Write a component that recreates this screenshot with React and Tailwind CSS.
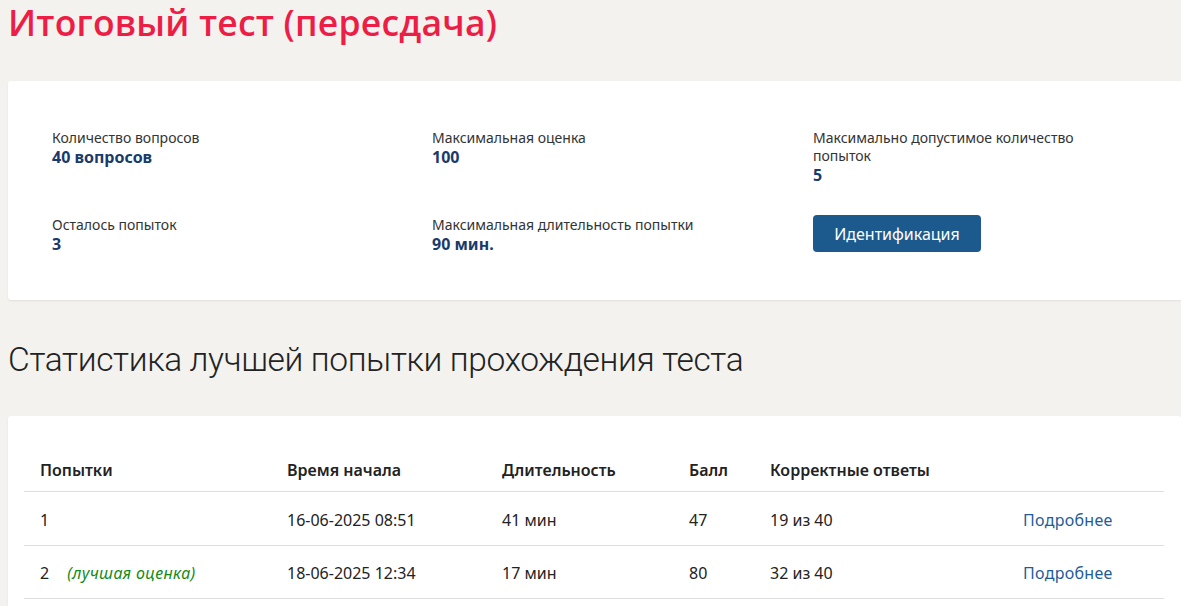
export default function App() {
  const body = { fontFamily: '"Noto Sans", "Open Sans", sans-serif' };
  const rows = [
    { n: "1", best: false, t: "16-06-2025 08:51", d: "41 мин", b: "47", c: "19 из 40", h: "h-[54px]" },
    { n: "2", best: true, t: "18-06-2025 12:34", d: "17 мин", b: "80", c: "32 из 40", h: "h-[53px]" },
  ];
  return (
    <div className="h-[606px] bg-[#f3f2ef] pl-2 overflow-hidden" style={body}>
      <h1
        className="text-[35.5px] leading-[44px] font-semibold text-[#ee1d46] m-0 tracking-[0.2px]"
        style={{ fontFamily: '"Open Sans", "Noto Sans", sans-serif' }}
      >
        Итоговый тест (пересдача)
      </h1>

      <div className="mt-[37px] bg-white rounded-[3px] shadow-[0_1px_2px_rgba(0,0,0,0.08)] pl-[44px] pt-[48px] pb-[46px] w-[1190px]">
        <div className="grid grid-cols-[380px_381px_380px] gap-y-[30px] text-[14px] leading-[18px] text-[#333]">
          <div>
            <div>Количество вопросов</div>
            <div className="text-[16px] leading-[20px] font-bold text-[#1a3a6b]">40 вопросов</div>
          </div>
          <div>
            <div>Максимальная оценка</div>
            <div className="text-[16px] leading-[20px] font-bold text-[#1a3a6b]">100</div>
          </div>
          <div className="max-w-[300px]">
            <div>Максимально допустимое количество попыток</div>
            <div className="text-[16px] leading-[20px] font-bold text-[#1a3a6b]">5</div>
          </div>
          <div className="pt-[1px]">
            <div>Осталось попыток</div>
            <div className="text-[16px] leading-[20px] font-bold text-[#1a3a6b]">3</div>
          </div>
          <div className="pt-[1px]">
            <div>Максимальная длительность попытки</div>
            <div className="text-[16px] leading-[20px] font-bold text-[#1a3a6b]">90 мин.</div>
          </div>
          <div>
            <button className="w-[168px] h-[37px] bg-[#1c5a8e] text-white text-[16px] rounded-[4px]">
              Идентификация
            </button>
          </div>
        </div>
      </div>

      <h2
        className="mt-[40px] text-[33.5px] leading-[40px] font-light text-[#222] tracking-[-0.35px]"
        style={{ fontFamily: '"Roboto", "Noto Sans", sans-serif' }}
      >
        Статистика лучшей попытки прохождения теста
      </h2>

      <div className="mt-[36px] bg-white rounded-[3px] shadow-[0_1px_2px_rgba(0,0,0,0.08)] pl-4 pr-[17px] pt-[33px] w-[1173px] h-[220px]">
        <table className="w-[1140px] border-collapse text-[16px] text-[#222]">
          <colgroup>
            <col className="w-[247px]" />
            <col className="w-[215px]" />
            <col className="w-[187px]" />
            <col className="w-[81px]" />
            <col className="w-[253px]" />
            <col />
          </colgroup>
          <thead>
            <tr className="h-[42px] border-b border-[#dedede]">
              <th className="text-left font-semibold pl-4 align-middle">Попытки</th>
              <th className="text-left font-semibold pl-4 align-middle">Время начала</th>
              <th className="text-left font-semibold pl-4 align-middle">Длительность</th>
              <th className="text-left font-semibold pl-4 align-middle">Балл</th>
              <th className="text-left font-semibold pl-4 align-middle">Корректные ответы</th>
              <th></th>
            </tr>
          </thead>
          <tbody>
            {rows.map((r) => (
              <tr key={r.n} className={`${r.h} border-b border-[#dedede]`}>
                <td className="pl-4 pt-[3px]">
                  {r.n}
                  {r.best && (
                    <span className="ml-[18px] italic text-[16px] text-[#158a15] tracking-[0.4px]">(лучшая оценка)</span>
                  )}
                </td>
                <td className="pl-4 pt-[3px]">{r.t}</td>
                <td className="pl-4 pt-[3px]">{r.d}</td>
                <td className="pl-4 pt-[3px]">{r.b}</td>
                <td className="pl-4 pt-[3px]">{r.c}</td>
                <td className="pl-4 pt-[3px]">
                  <a className="text-[#1f5c99] tracking-[0.3px]">Подробнее</a>
                </td>
              </tr>
            ))}
          </tbody>
        </table>
      </div>
    </div>
  );
}
